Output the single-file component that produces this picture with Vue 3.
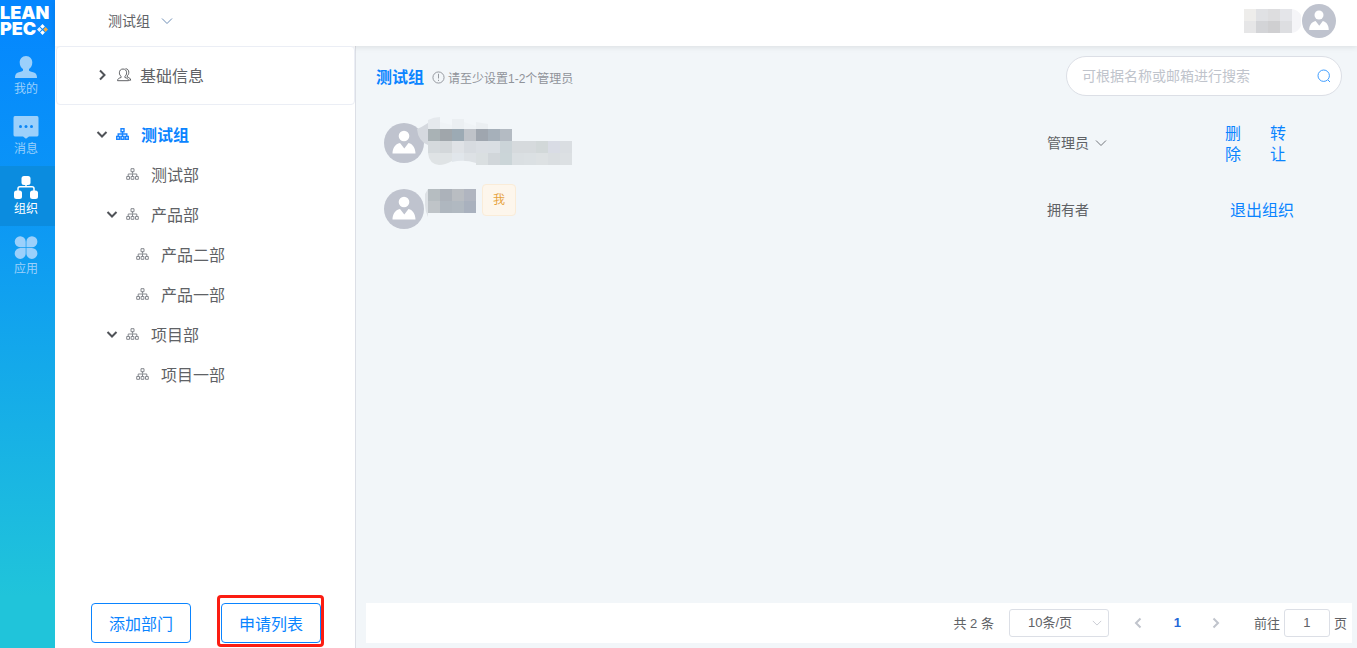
<script setup>
import { ref } from 'vue'

const navItems = [
  { key: 'me', label: '我的' },
  { key: 'message', label: '消息' },
  { key: 'org', label: '组织' },
  { key: 'apps', label: '应用' },
]
const active = ref('org')

const departments = [
  { name: '测试组', level: 0, open: true },
  { name: '测试部', level: 1 },
  { name: '产品部', level: 1, open: true },
  { name: '产品二部', level: 2 },
  { name: '产品一部', level: 2 },
  { name: '项目部', level: 1, open: true },
  { name: '项目一部', level: 2 },
]

const keyword = ref('')
const page = ref('1')

const rowCells = (x, y, colors) => colors.map((fill, i) => ({ x: x + i * 12, y, fill }))

const firstMask = [
  ...rowCells(11, 12, ['#a9b2b5', '#a0a6ab', '#9caab4', '#bfc3c9', '#9fa6af', '#a6b0ba', '#b4bbc3']),
  ...rowCells(11, 24, ['#d5dadd', '#d3d7da', '#dfe2e6', '#d7dbe0', '#dadee3', '#d9dee3', '#cbd4d8', '#d6dadd', '#d6dadd', '#d2d8d9', '#d9dce5', '#dadee2']),
  ...rowCells(35, 36, ['#e1e6eb', '#dde1e5', '#dadfe1', '#d1d6da', '#cbd5d8', '#dadfe2', '#dbe0e3', '#dde1e3', '#dadee1', '#dce0e3']),
]
const secondMask = [
  ...rowCells(11, 5, ['#b6bdc1', '#acb2ba', '#b9bdc2', '#b0b5c0']),
  ...rowCells(11, 17, ['#bfc4c8', '#afb7bf', '#b1b9c1', '#a9b1be']),
]
const userMask = [
  ...rowCells(0, 0, ['#eeedeb', '#e0e1e4', '#dddddf', '#e4e5e9']),
  ...rowCells(0, 12, ['#e6e6e7', '#d3d4d7', '#cfcfd1', '#dddee1']),
]
</script>

<template>
  <div class="app">
    <nav class="side" aria-label="主导航">
      <div class="logo">
        <div class="logo-line">LEAN</div>
        <div class="logo-line">
          <span>PEC</span>
          <svg class="logo-mark" viewBox="0 0 12 12">
            <path d="M6 0l2.600 2.600L6 5.200 3.400 2.600z" fill="#fff" />
            <path d="M2.600 3.400L5.200 6 2.600 8.600 0 6z" fill="#e3f2ff" />
            <path d="M9.400 3.400L12 6 9.400 8.600 6.800 6z" fill="#f5a93c" />
            <path d="M6 6.800l2.600 2.600L6 12 3.400 9.400z" fill="#fff" />
          </svg>
        </div>
      </div>
      <button
        v-for="item in navItems"
        :key="item.key"
        type="button"
        class="nav-item"
        :class="{ active: active === item.key }"
        @click="active = item.key"
      >
        <svg v-if="item.key === 'me'" class="nav-icon" viewBox="0 0 26 26">
          <path d="M13 2c4 0 6.300 3 6.300 6.500 0 3-1.500 5.400-3.300 6.500v1.500c0 .8 2.500 1.300 5 2 2.200.7 3 2.500 3 5.500H2c0-3 .8-4.800 3-5.500 2.500-.7 5-1.200 5-2V15c-1.800-1.100-3.300-3.500-3.300-6.500C6.700 5 9 2 13 2z" />
        </svg>
        <svg v-else-if="item.key === 'message'" class="nav-icon" viewBox="0 0 26 26">
          <path d="M2.500 2h21A1.700 1.700 0 0 1 25.500 3.700v17a1.700 1.700 0 0 1-2 1.700H16l-3 2.400-3-2.400H2.500a1.700 1.700 0 0 1-2-1.700v-17A1.700 1.700 0 0 1 2.500 2z" />
          <g fill="#0b86f5"><circle cx="7.500" cy="12.500" r="1.500" /><circle cx="13" cy="12.500" r="1.500" /><circle cx="18.500" cy="12.500" r="1.500" /></g>
        </svg>
        <svg v-else-if="item.key === 'org'" class="nav-icon" viewBox="0 0 26 26">
          <rect x="8.500" y="2" width="9" height="9" rx="2.500" />
          <rect x="1" y="16.500" width="8" height="8.500" rx="2.500" />
          <rect x="17" y="16.500" width="8" height="8.500" rx="2.500" />
          <path d="M13 10v3M5 17v-2.500Q5 12.700 7 12.700h12q2 0 2 1.800V17" fill="none" stroke="currentColor" stroke-width="1.500" />
        </svg>
        <svg v-else class="nav-icon" viewBox="0 0 26 26">
          <path d="M12.700 13.200H7.400A5.500 5.500 0 1 1 12.700 7.700zM13.400 13.200V7.700a5.500 5.500 0 1 1 5.400 5.500zM12.700 13.900v5.400a5.500 5.500 0 1 1-5.300-5.400zM13.400 13.900h5.400a5.500 5.500 0 1 1-5.400 5.400z" />
        </svg>
        <span>{{ item.label }}</span>
      </button>
    </nav>

    <div class="page">
      <header class="top">
        <label class="pick org-pick">
          <select aria-label="切换组织"><option>测试组</option></select>
          <svg class="chev" viewBox="0 0 12 12"><path d="M1 3.500l5 5 5-5" /></svg>
        </label>
        <div class="user">
          <svg class="user-mask" viewBox="0 0 58 24" aria-hidden="true">
            <path d="M48 0q6 1 9 6v11q-3 6-9 7z" fill="#f5f5f8" />
            <rect v-for="(c, i) in userMask" :key="i" :x="c.x" :y="c.y" width="12" height="12" :fill="c.fill" />
          </svg>
          <svg class="avatar small" viewBox="0 0 40 40" role="img" aria-label="头像">
            <circle cx="20" cy="20" r="20" fill="#bfc3ce" />
            <circle cx="20" cy="13" r="5.300" fill="#fff" />
            <path d="M8.500 30.500c0-5 2.500-9.500 7.500-10.500l4.300 5.500L24.500 20c4.500 1 7 5.500 7 10.500z" fill="#fff" />
          </svg>
        </div>
      </header>

      <div class="body">
        <aside class="tree-panel">
          <button type="button" class="basic">
            <svg class="arrow" viewBox="0 0 12 12"><path d="M4 1.500L8.500 6 4 10.500" /></svg>
            <svg class="people" viewBox="0 0 16 16">
              <path d="M7 2c2.300 0 3.600 1.600 3.600 3.800 0 1.600-.7 2.900-1.700 3.500v1.200c2.200.6 3.400 1.200 3.600 3.200H1.500c.2-2 1.400-2.600 3.600-3.200V9.300c-1-.6-1.700-1.900-1.700-3.500C3.400 3.600 4.700 2 7 2z" />
              <path d="M9.500 1.700c2 0 3.300 1.500 3.300 3.600 0 1.500-.6 2.800-1.500 3.400v1.400c2 .6 3.200 1.200 3.400 3.100h-2" />
            </svg>
            <span>基础信息</span>
          </button>

          <ul class="tree">
            <li v-for="d in departments" :key="d.name">
              <button type="button" class="node" :class="['level-' + d.level, { current: d.level === 0 }]">
                <svg class="arrow" viewBox="0 0 12 12"><path v-if="d.open" d="M1.500 4L6 8.500 10.500 4" /></svg>
                <svg class="dept" viewBox="0 0 13 12">
                  <path d="M5 .7h3v3H5zM6.500 3.700v2M2.200 8.500V6h8.600v2.500M6.500 6v2.500M.7 8.500h2.800v2.800H.7zM5.100 8.500h2.800v2.800H5.100zM9.500 8.500h2.800v2.800H9.500z" />
                </svg>
                <span>{{ d.name }}</span>
              </button>
            </li>
          </ul>

          <div class="tree-actions">
            <button type="button" class="outline">添加部门</button>
            <button type="button" class="outline marked">申请列表</button>
          </div>
        </aside>

        <main class="members">
          <div class="heading">
            <h1>测试组</h1>
            <p class="hint">
              <svg viewBox="0 0 14 14"><circle cx="7" cy="7" r="6" /><path d="M7 3v5M7 9.500v1.300" /></svg>
              <span>请至少设置1-2个管理员</span>
            </p>
            <div class="search">
              <input v-model="keyword" type="text" placeholder="可根据名称或邮箱进行搜索" aria-label="搜索成员">
              <svg viewBox="0 0 14 14"><circle cx="6.700" cy="6.700" r="5.700" /><path d="M11 11l2 2" /></svg>
            </div>
          </div>

          <table>
            <colgroup><col><col class="col-role"><col class="col-actions"></colgroup>
            <tbody>
              <tr>
                <td>
                  <div class="person">
                    <svg class="avatar" viewBox="0 0 40 40" role="img" aria-label="头像">
                      <circle cx="20" cy="20" r="20" fill="#bfc3ce" />
                      <circle cx="20" cy="13" r="5.300" fill="#fff" />
                      <path d="M8.500 30.500c0-5 2.500-9.500 7.500-10.500l4.300 5.500L24.500 20c4.500 1 7 5.500 7 10.500z" fill="#fff" />
                    </svg>
                    <svg class="mask-first" viewBox="0 0 156 52" aria-hidden="true">
                      <path d="M11 8v20Q1 24 0 12q5-2 11-6z" fill="#d5d9df" />
                      <path d="M11 3q6-3 12-3v12H11z" fill="#e5e9ed" />
                      <path d="M35 2h12v10H35zM59 5l12 2v5H59z" fill="#ebeff2" />
                      <path d="M23 12V5l12 3v4zM47 12V5l12 4v3z" fill="#eff3f6" />
                      <path d="M11 36h24v8q-7 4-13 4-10-1-11-12z" fill="#dfe3e5" />
                      <rect v-for="(c, i) in firstMask" :key="i" :x="c.x" :y="c.y" width="12" height="12" :fill="c.fill" />
                      <path d="M35 49V45q12-3 24 1v3z" fill="#f2f6f9" />
                    </svg>
                  </div>
                </td>
                <td>
                  <label class="pick">
                    <select aria-label="成员角色"><option>管理员</option></select>
                    <svg class="chev" viewBox="0 0 12 12"><path d="M1 3.500l5 5 5-5" /></svg>
                  </label>
                </td>
                <td>
                  <div class="actions">
                    <button type="button" class="narrow">删除</button>
                    <button type="button" class="narrow">转让</button>
                  </div>
                </td>
              </tr>
              <tr>
                <td>
                  <div class="person">
                    <svg class="avatar" viewBox="0 0 40 40" role="img" aria-label="头像">
                      <circle cx="20" cy="20" r="20" fill="#bfc3ce" />
                      <circle cx="20" cy="13" r="5.300" fill="#fff" />
                      <path d="M8.500 30.500c0-5 2.500-9.500 7.500-10.500l4.300 5.500L24.500 20c4.500 1 7 5.500 7 10.500z" fill="#fff" />
                    </svg>
                    <svg class="mask-second" viewBox="0 0 65 50" aria-hidden="true">
                      <path d="M8 10l3-5v28q-3-6-3-12z" fill="#dde1e5" />
                      <rect v-for="(c, i) in secondMask" :key="i" :x="c.x" :y="c.y" width="12" height="12" :fill="c.fill" />
                    </svg>
                    <span class="me-tag">我</span>
                  </div>
                </td>
                <td><span class="role">拥有者</span></td>
                <td>
                  <div class="actions">
                    <button type="button" class="wide">退出组织</button>
                  </div>
                </td>
              </tr>
            </tbody>
          </table>

          <footer class="pager">
            <span class="total">共 2 条</span>
            <label class="size">
              <select aria-label="每页条数"><option>10条/页</option></select>
              <svg class="chev" viewBox="0 0 12 12"><path d="M1 3.500l5 5 5-5" /></svg>
            </label>
            <button type="button" class="step" aria-label="上一页">
              <svg viewBox="0 0 12 12"><path d="M8.500 1.500L4 6l4.500 4.500" /></svg>
            </button>
            <button type="button" class="step number">1</button>
            <button type="button" class="step" aria-label="下一页">
              <svg viewBox="0 0 12 12"><path d="M3.500 1.500L8 6l-4.500 4.500" /></svg>
            </button>
            <label class="jump">前往<input v-model="page" type="text">页</label>
          </footer>
        </main>
      </div>
    </div>
  </div>
</template>

<style>
body {
  margin: 0;
}
</style>

<style scoped>
.app {
  display: flex;
  min-height: 100vh;
  font-family: "Liberation Sans", "Noto Sans CJK SC", sans-serif;
  font-size: 14px;
  color: #606266;
  background: #fff;
}
.app * {
  box-sizing: border-box;
}
button,
select,
input {
  font: inherit;
  color: inherit;
  border: 0;
  padding: 0;
  margin: 0;
  background: none;
  outline: none;
}
button,
select {
  cursor: pointer;
}
select {
  appearance: none;
}
svg {
  display: block;
  flex: none;
}

.side {
  flex: none;
  width: 55px;
  background: linear-gradient(#0486ff, #0b95f6 30%, #20c4da 92%);
}
.logo {
  height: 46px;
  padding-top: 5px;
  color: #fff;
  font-family: Inter, sans-serif;
  font-size: 18px;
  font-weight: 900;
  line-height: 16px;
}
.logo-line {
  display: flex;
  align-items: center;
  gap: 1px;
}
.logo-mark {
  width: 11px;
  height: 11px;
}
.nav-item {
  display: flex;
  flex-direction: column;
  align-items: center;
  gap: 1px;
  width: 100%;
  height: 60px;
  padding: 8px 3px 0 0;
  font-size: 12px;
  line-height: 16px;
  color: #9bd0fb;
}
.nav-item.active {
  background: #0b8cdf;
  color: #fff;
}
.nav-icon {
  width: 26px;
  height: 26px;
  fill: currentColor;
}

.page {
  flex: 1;
  min-width: 0;
  display: flex;
  flex-direction: column;
}
.top {
  position: relative;
  display: flex;
  align-items: center;
  justify-content: space-between;
  height: 46px;
  padding: 0 21px 4px 53px;
  background: #fff;
  box-shadow: 0 1px 6px rgba(0, 0, 0, 0.1);
}
.pick {
  display: inline-flex;
  align-items: center;
  gap: 6px;
}
.org-pick {
  gap: 11px;
}
.pick select {
  line-height: 20px;
}
.chev {
  width: 12px;
  height: 12px;
  fill: none;
  stroke: #73767c;
  stroke-width: 1;
  pointer-events: none;
}
.org-pick .chev {
  stroke: #6c8db5;
}
.user {
  display: flex;
  align-items: center;
}
.user-mask {
  width: 58px;
  height: 24px;
}
.avatar {
  width: 40px;
  height: 40px;
}
.avatar.small {
  width: 34px;
  height: 34px;
}

.body {
  flex: 1;
  display: flex;
}
.tree-panel {
  flex: none;
  display: flex;
  flex-direction: column;
  width: 301px;
  padding: 0 0 5px 1px;
  border-right: 1px solid #dcdfe6;
}
.basic {
  position: relative;
  display: flex;
  align-items: center;
  height: 59px;
  padding: 0 0 2px 39px;
  border: 1px solid #ebeef5;
  border-radius: 4px;
  background: #fff;
  font-size: 16px;
}
.basic .arrow {
  margin-right: 8px;
}
.arrow {
  width: 12px;
  height: 12px;
  fill: none;
  stroke: #505358;
  stroke-width: 2;
}
.people {
  width: 16px;
  height: 16px;
  margin-right: 8px;
  fill: none;
  stroke: #606266;
}
.tree {
  flex: 1;
  margin: 0;
  padding: 9px 0 0;
  list-style: none;
}
.node {
  display: flex;
  align-items: center;
  width: 100%;
  height: 40px;
  padding-left: 40px;
  font-size: 16px;
}
.level-1 {
  padding-left: 50px;
}
.level-2 {
  padding-left: 60px;
}
.dept {
  width: 13px;
  height: 12px;
  margin: 0 12px 0 8px;
  fill: none;
  stroke: #85888e;
}
.current {
  color: #0a84ff;
  font-weight: 700;
}
.current .dept {
  stroke: #1a84ff;
  stroke-width: 1.4;
}
.tree-actions {
  display: flex;
  gap: 30px;
  padding-left: 35px;
}
.outline {
  position: relative;
  width: 100px;
  height: 40px;
  border: 1px solid #0a84ff;
  border-radius: 4px;
  background: #fff;
  color: #0a84ff;
  font-size: 16px;
}
.marked::after {
  content: "";
  position: absolute;
  inset: -9px -4px -5px -5px;
  border: 3px solid #fb1d12;
  border-radius: 4px;
}

.members {
  flex: 1;
  min-width: 0;
  display: flex;
  flex-direction: column;
  padding: 10px 0 5px;
  background: #f2f6f9;
}
.heading {
  display: flex;
  align-items: center;
  height: 40px;
  margin: 0 15px 14px 20px;
}
h1,
.hint {
  padding-top: 3px;
}
h1 {
  margin: 0 8px 0 0;
  color: #0a84ff;
  font-size: 16px;
  line-height: 24px;
}
.hint {
  display: flex;
  align-items: center;
  gap: 3px;
  margin: 0;
  font-size: 12px;
  color: #909399;
}
.hint svg {
  width: 13px;
  height: 13px;
  fill: none;
  stroke: #909399;
}
.search {
  display: flex;
  align-items: center;
  width: 276px;
  height: 40px;
  margin-left: auto;
  padding: 0 10px 0 15px;
  border: 1px solid #dcdfe6;
  border-radius: 20px;
  background: #fff;
}
.search input {
  flex: 1;
  min-width: 0;
  height: 38px;
}
.search input::placeholder {
  color: #c0c4cc;
  opacity: 1;
}
.search svg {
  width: 14px;
  height: 14px;
  fill: none;
  stroke: #409eff;
}

table {
  width: 100%;
  table-layout: fixed;
  border-collapse: collapse;
}
.col-role {
  width: 173px;
}
.col-actions {
  width: 137px;
}
td {
  height: 66px;
  padding: 0;
  vertical-align: middle;
}
.person {
  display: flex;
  align-items: center;
  padding-left: 28px;
}
.mask-first {
  width: 156px;
  height: 52px;
  margin-left: -7px;
}
.mask-second {
  width: 65px;
  height: 50px;
  margin-left: -7px;
}
.me-tag {
  align-self: flex-start;
  width: 34px;
  height: 32px;
  border: 1px solid #faecd8;
  border-radius: 4px;
  background: #fdf6ec;
  color: #e6a23c;
  font-size: 12px;
  line-height: 30px;
  text-align: center;
}
.actions {
  display: flex;
  gap: 19px;
  padding-top: 2px;
  color: #0a84ff;
  font-size: 16px;
  line-height: 21px;
}
.narrow {
  width: 26px;
  padding: 0 5px;
}
.wide {
  padding: 0 10px;
}

.pager {
  display: flex;
  align-items: center;
  justify-content: flex-end;
  height: 40px;
  margin: auto 5px 0 10px;
  padding: 0 5px 1px 0;
  background: #fff;
  font-size: 13px;
}
.total {
  margin-right: 15px;
}
.size {
  display: flex;
  align-items: center;
  width: 100px;
  height: 28px;
  margin-right: 10px;
  padding-right: 6px;
  border: 1px solid #dcdfe6;
  border-radius: 3px;
}
.size select {
  flex: 1;
  min-width: 0;
  height: 26px;
  padding-left: 18px;
}
.size .chev {
  width: 10px;
  height: 10px;
  stroke: #c0c4cc;
}
.step {
  display: flex;
  align-items: center;
  justify-content: center;
  width: 39px;
  height: 28px;
}
.step svg {
  width: 12px;
  height: 12px;
  fill: none;
  stroke: #c0c4cc;
  stroke-width: 2;
}
.number {
  color: #2468d8;
  font-weight: 700;
}
.jump {
  display: flex;
  align-items: center;
  gap: 4px;
  margin-left: 18px;
}
.jump input {
  width: 46px;
  height: 28px;
  border: 1px solid #dcdfe6;
  border-radius: 3px;
  text-align: center;
}
</style>
